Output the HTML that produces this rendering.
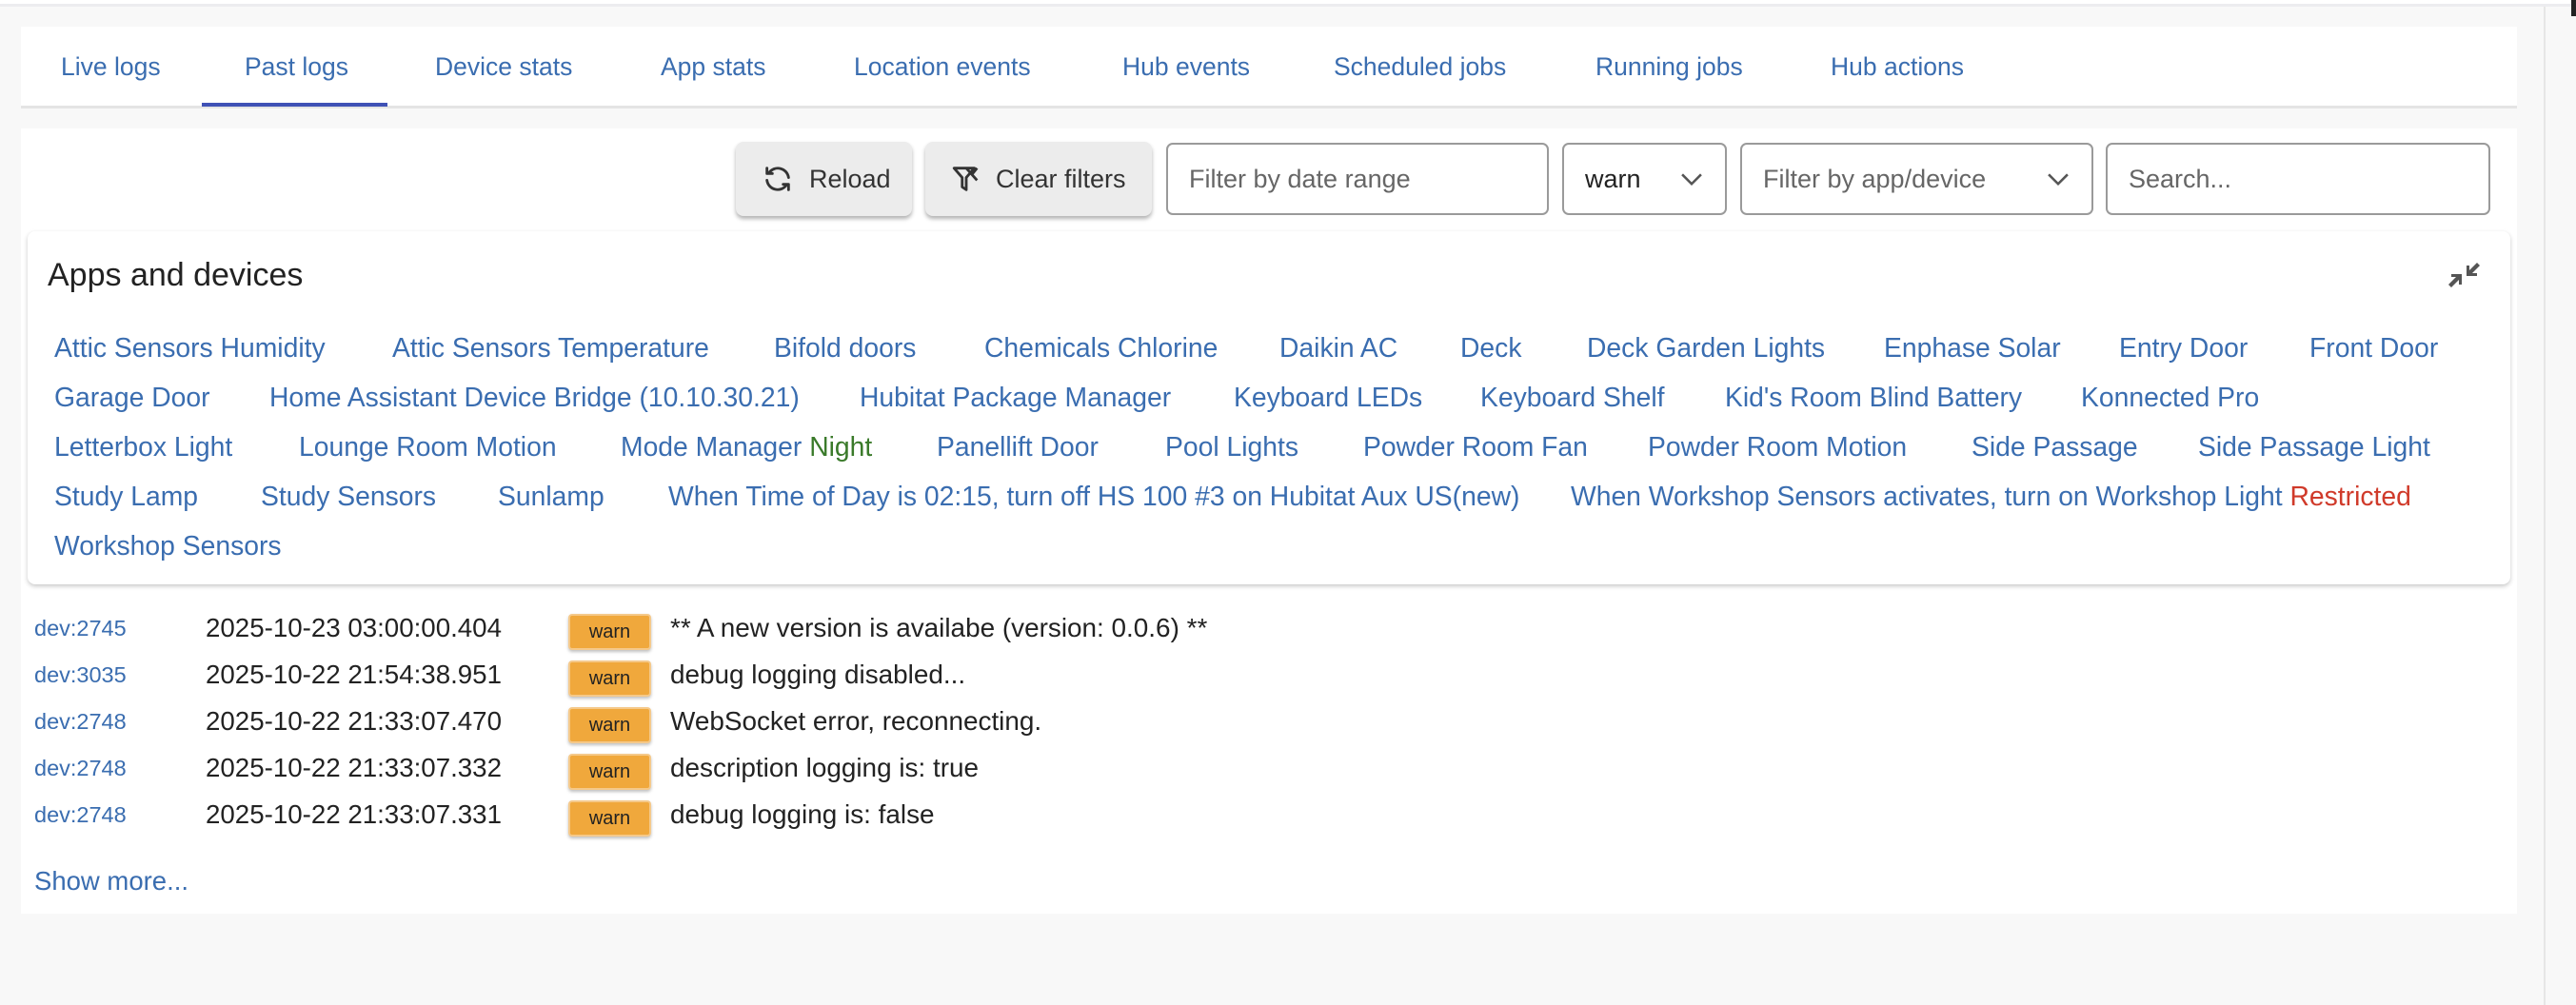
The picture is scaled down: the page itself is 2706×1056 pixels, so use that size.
<!DOCTYPE html>
<html><head><meta charset="utf-8"><style>
*{box-sizing:border-box;margin:0;padding:0}
body{width:2706px;height:1056px;background:#f8f8f8;font-family:"Liberation Sans",sans-serif;position:relative;overflow:hidden}
.a{position:absolute;white-space:nowrap}
.topline{left:0;top:0;width:2706px;height:7px;background:#fff;border-bottom:3px solid #ececef}
.tabs{left:22px;top:28px;width:2622px;height:86px;background:#fff;border-bottom:3px solid #e4e4e4}
.tab{top:55px;font-size:26.5px;color:#3a6db0}
.ul{left:212px;top:108px;width:195px;height:4px;background:#3f51b5}
.card{left:22px;top:135px;width:2622px;height:825px;background:#fff}
.btn{top:149px;height:78px;background:#ececec;border-radius:8px;box-shadow:0 3px 4px rgba(0,0,0,.3);font-size:27px;color:#333;display:flex;align-items:center}
.inp{top:150px;height:76px;border:2px solid #9a9a9a;border-radius:7px;background:#fff;font-size:27px;color:#666;display:flex;align-items:center;padding-left:22px}
.chev{position:absolute;right:18px;top:20px}
.apps{left:29px;top:243px;width:2608px;height:371px;background:#fff;border-radius:8px;box-shadow:0 2px 5px rgba(0,0,0,.22)}
.title{left:50px;top:270px;font-size:34px;color:#222}
.l{font-size:28.3px;color:#3a6db0}
.dev{left:36px;font-size:23.5px;color:#3a6db0}
.dt{left:216px;font-size:27.7px;color:#222}
.bd{left:597px;width:87px;height:38px;background:#f0a83c;border:2px solid #f5c98a;border-radius:4px;box-shadow:0 2px 3px rgba(0,0,0,.25);font-size:20px;color:#222;text-align:center;line-height:34px}
.msg{left:704px;font-size:27.9px;color:#222}
</style></head><body>
<div class="a topline"></div>
<div class="a" style="left:2672px;top:7px;width:2px;height:1049px;background:#e6e6e6"></div>
<div class="a" style="left:2701px;top:0;width:5px;height:17px;background:#222"></div>
<div class="a tabs"></div>
<div class="a tab" style="left:64px">Live logs</div>
<div class="a tab" style="left:257px">Past logs</div>
<div class="a tab" style="left:457px">Device stats</div>
<div class="a tab" style="left:694px">App stats</div>
<div class="a tab" style="left:897px">Location events</div>
<div class="a tab" style="left:1179px">Hub events</div>
<div class="a tab" style="left:1401px">Scheduled jobs</div>
<div class="a tab" style="left:1676px">Running jobs</div>
<div class="a tab" style="left:1923px">Hub actions</div>
<div class="a ul"></div>
<div class="a card"></div>
<div class="a btn" style="left:773px;width:185px;padding-left:27px"><svg width="34" height="34" viewBox="0 0 24 24" fill="none" stroke="#333" stroke-width="2" stroke-linecap="round" stroke-linejoin="round" style="margin-right:16px"><path d="M20 11A8 8 0 0 0 5.5 7.5M4 4v4h4"/><path d="M4 13a8 8 0 0 0 14.5 3.5M20 20v-4h-4"/></svg>Reload</div>
<div class="a btn" style="left:972px;width:238px;padding-left:26px"><svg width="34" height="34" viewBox="0 0 24 24" fill="none" stroke="#333" stroke-width="2" stroke-linejoin="round" style="margin-right:14px"><path d="M3 4h15l-6 7v9l-3-2v-7zM12 4l8 9M20 4l-4 5"/></svg>Clear filters</div>
<div class="a inp" style="left:1225px;width:402px">Filter by date range</div>
<div class="a inp" style="left:1641px;width:173px;color:#222">warn<svg class="chev" width="34" height="34" viewBox="0 0 24 24" fill="none" stroke="#555" stroke-width="1.8"><path d="M5 8l7 7 7-7"/></svg></div>
<div class="a inp" style="left:1828px;width:371px">Filter by app/device<svg class="chev" width="34" height="34" viewBox="0 0 24 24" fill="none" stroke="#555" stroke-width="1.8"><path d="M5 8l7 7 7-7"/></svg></div>
<div class="a inp" style="left:2212px;width:404px">Search...</div>
<div class="a apps"></div>
<div class="a title">Apps and devices</div>
<svg class="a" style="left:2572px;top:274px" width="33" height="30" viewBox="0 0 33 30" fill="#555"><path d="M30 2l3 3-8 8h5v3H19V5h3v5z"/><path d="M3 28l-3-3 8-8H3v-3h11v11h-3v-5z"/></svg>
<div class="a l" style="top:349px;left:57px">Attic Sensors Humidity</div>
<div class="a l" style="top:349px;left:412px">Attic Sensors Temperature</div>
<div class="a l" style="top:349px;left:813px">Bifold doors</div>
<div class="a l" style="top:349px;left:1034px">Chemicals Chlorine</div>
<div class="a l" style="top:349px;left:1344px">Daikin AC</div>
<div class="a l" style="top:349px;left:1534px">Deck</div>
<div class="a l" style="top:349px;left:1667px">Deck Garden Lights</div>
<div class="a l" style="top:349px;left:1979px">Enphase Solar</div>
<div class="a l" style="top:349px;left:2226px">Entry Door</div>
<div class="a l" style="top:349px;left:2426px">Front Door</div>
<div class="a l" style="top:401px;left:57px">Garage Door</div>
<div class="a l" style="top:401px;left:283px">Home Assistant Device Bridge (10.10.30.21)</div>
<div class="a l" style="top:401px;left:903px">Hubitat Package Manager</div>
<div class="a l" style="top:401px;left:1296px">Keyboard LEDs</div>
<div class="a l" style="top:401px;left:1555px">Keyboard Shelf</div>
<div class="a l" style="top:401px;left:1812px">Kid's Room Blind Battery</div>
<div class="a l" style="top:401px;left:2186px">Konnected Pro</div>
<div class="a l" style="top:453px;left:57px">Letterbox Light</div>
<div class="a l" style="top:453px;left:314px">Lounge Room Motion</div>
<div class="a l" style="top:453px;left:652px">Mode Manager <span style="color:#3a7a2a">Night</span></div>
<div class="a l" style="top:453px;left:984px">Panellift Door</div>
<div class="a l" style="top:453px;left:1224px">Pool Lights</div>
<div class="a l" style="top:453px;left:1432px">Powder Room Fan</div>
<div class="a l" style="top:453px;left:1731px">Powder Room Motion</div>
<div class="a l" style="top:453px;left:2071px">Side Passage</div>
<div class="a l" style="top:453px;left:2309px">Side Passage Light</div>
<div class="a l" style="top:505px;left:57px">Study Lamp</div>
<div class="a l" style="top:505px;left:274px">Study Sensors</div>
<div class="a l" style="top:505px;left:523px">Sunlamp</div>
<div class="a l" style="top:505px;left:702px">When Time of Day is 02:15, turn off HS 100 #3 on Hubitat Aux US(new)</div>
<div class="a l" style="top:505px;left:1650px">When Workshop Sensors activates, turn on Workshop Light <span style="color:#d03a2a">Restricted</span></div>
<div class="a l" style="top:557px;left:57px">Workshop Sensors</div>

<div class="a dev" style="top:647px">dev:2745</div><div class="a dt" style="top:644px">2025-10-23 03:00:00.404</div><div class="a bd" style="top:645px">warn</div><div class="a msg" style="top:644px">** A new version is availabe (version: 0.0.6) **</div>
<div class="a dev" style="top:696px">dev:3035</div><div class="a dt" style="top:693px">2025-10-22 21:54:38.951</div><div class="a bd" style="top:694px">warn</div><div class="a msg" style="top:693px">debug logging disabled...</div>
<div class="a dev" style="top:745px">dev:2748</div><div class="a dt" style="top:742px">2025-10-22 21:33:07.470</div><div class="a bd" style="top:743px">warn</div><div class="a msg" style="top:742px">WebSocket error, reconnecting.</div>
<div class="a dev" style="top:794px">dev:2748</div><div class="a dt" style="top:791px">2025-10-22 21:33:07.332</div><div class="a bd" style="top:792px">warn</div><div class="a msg" style="top:791px">description logging is: true</div>
<div class="a dev" style="top:843px">dev:2748</div><div class="a dt" style="top:840px">2025-10-22 21:33:07.331</div><div class="a bd" style="top:841px">warn</div><div class="a msg" style="top:840px">debug logging is: false</div>
<div class="a l" style="top:910px;left:36px;font-size:27.5px">Show more...</div>
</body></html>
